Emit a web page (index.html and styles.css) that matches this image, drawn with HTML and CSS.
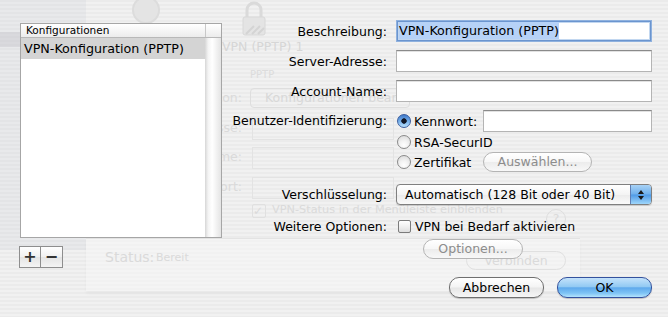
FILE: index.html
```html
<!DOCTYPE html>
<html lang="de">
<head>
  <meta charset="UTF-8" />
  <title>VPN-Konfiguration</title>
  <link rel="stylesheet" href="styles.css">
</head>
<body>
  <div class="window">
    <!-- faded window content behind the sheet -->
    <div class="ghost ghost-sidebar"></div>
    <div class="ghost ghost-row"></div>
    <div class="ghost ghost-globe"></div>
    <svg class="ghost ghost-lock" width="24" height="36" viewBox="0 0 24 36">
      <path d="M5 17 V10 a7 7 0 0 1 14 0 V17" fill="none" stroke="#dadada" stroke-width="3"/>
      <rect x="1" y="17" width="22" height="18" rx="2" fill="#e4e4e4" stroke="#d8d8d8"/>
      <path d="M4 34 l8 -8 M10 34 l8 -8 M16 34 l6 -6" stroke="#d4d4d4" stroke-width="2"/>
    </svg>
    <div class="ghost ghost-title">VPN (PPTP) 1</div>
    <div class="ghost ghost-sub">PPTP</div>
    <div class="ghost ghost-label label-konf">Konfiguration:</div>
    <div class="ghost ghost-popup">Konfigurationen bearbeiten</div>
    <div class="ghost ghost-label label-server">Server-Adresse:</div>
    <div class="ghost ghost-label label-account">Account-Name:</div>
    <div class="ghost ghost-label label-pass">Kennwort:</div>
    <div class="ghost ghost-field field-a"></div>
    <div class="ghost ghost-field field-b"></div>
    <div class="ghost ghost-field field-c"></div>
    <div class="ghost ghost-check"><span class="ghost-box">&#10003;</span>VPN-Status in der Menüleiste einblenden</div>
    <div class="ghost ghost-help">?</div>
    <div class="ghost ghost-panel"><span class="status">Status:</span><span class="status-value">Bereit</span></div>
    <div class="ghost ghost-connect">Verbinden</div>

    <div class="sheet">
      <div class="list-col">
        <div class="list">
          <div class="list-header">
            <div class="list-header-cell">Konfigurationen</div>
            <div class="list-header-end"></div>
          </div>
          <div class="list-body">
            <div class="list-rows">
              <div class="list-row selected">VPN-Konfiguration (PPTP)</div>
            </div>
            <div class="list-scroller"></div>
          </div>
        </div>
        <div class="list-buttons">
          <div class="square-btn">+</div>
          <div class="square-btn">&minus;</div>
        </div>
      </div>

      <div class="form-col">
        <div class="row">
          <div class="label">Beschreibung:</div>
          <div class="field focused"><span class="selection">VPN-Konfiguration (PPTP)</span></div>
        </div>
        <div class="row">
          <div class="label">Server-Adresse:</div>
          <div class="field"></div>
        </div>
        <div class="row">
          <div class="label">Account-Name:</div>
          <div class="field"></div>
        </div>
        <div class="row row-top">
          <div class="label label-tall">Benutzer-Identifizierung:</div>
          <div class="radio-group">
            <div class="radio-line tall">
              <span class="radio checked"></span><span class="radio-text">Kennwort:</span>
              <div class="field small"></div>
            </div>
            <div class="radio-line">
              <span class="radio"></span><span class="radio-text">RSA-SecurID</span>
            </div>
            <div class="radio-line">
              <span class="radio"></span><span class="radio-text">Zertifikat</span>
              <div class="pill-btn disabled choose">Auswählen...</div>
            </div>
          </div>
        </div>
        <div class="row row-popup">
          <div class="label">Verschlüsselung:</div>
          <div class="popup">
            <span class="popup-text">Automatisch (128 Bit oder 40 Bit)</span>
            <span class="popup-arrows">
              <svg width="8" height="12" viewBox="0 0 8 12">
                <path d="M4 1 L7 5 H1 Z M4 11 L7 7 H1 Z" fill="#1a1a1a"/>
              </svg>
            </span>
          </div>
        </div>
        <div class="row row-check">
          <div class="label">Weitere Optionen:</div>
          <span class="checkbox"></span><span class="check-text">VPN bei Bedarf aktivieren</span>
        </div>
        <div class="row row-options">
          <div class="label"></div>
          <div class="pill-btn disabled options">Optionen...</div>
        </div>
        <div class="footer">
          <div class="pill-btn footer-btn">Abbrechen</div>
          <div class="pill-btn footer-btn default">OK</div>
        </div>
      </div>
    </div>
  </div>
</body>
</html>
```

FILE: styles.css
```css
body {
  margin: 0;
  font-family: 'DejaVu Sans', 'Liberation Sans', sans-serif;
  font-size: 12.5px;
  color: #000;
}
.window {
  position: relative;
  width: 668px;
  height: 317px;
  overflow: hidden;
  background: repeating-linear-gradient(#ebebeb 0 2px, #f1f1f1 2px 4px);
}

/* ghost content of the window behind the sheet */
.ghost {
  position: absolute;
  color: #dadada;
  white-space: nowrap;
}
.ghost-sidebar {
  left: 0;
  top: 0;
  width: 86px;
  height: 250px;
  background: rgba(200, 204, 214, 0.22);
}
.ghost-row {
  left: 0;
  top: 32px;
  width: 86px;
  height: 15px;
  background: rgba(190, 190, 196, 0.35);
}
.ghost-globe {
  left: 132px;
  top: -4px;
  width: 24px;
  height: 24px;
  border: 2px solid #dcdcdc;
  border-radius: 50%;
  background: #e4e4e4;
}
.ghost-lock {
  left: 242px;
  top: 0;
}
.ghost-title {
  left: 222px;
  top: 39px;
  color: #d6d6d6;
}
.ghost-sub {
  left: 250px;
  top: 69px;
  font-size: 10px;
  color: #dcdcdc;
}
.ghost-label {
  width: 130px;
  text-align: right;
  left: 112px;
}
.label-konf { top: 90px; }
.label-server { top: 120px; }
.label-account { top: 149px; }
.label-pass { top: 179px; }
.ghost-popup {
  left: 250px;
  top: 88px;
  width: 160px;
  height: 20px;
  box-sizing: border-box;
  border: 1px solid #dedede;
  border-radius: 4px;
  padding: 1px 0 0 14px;
  color: #d8d8d8;
}
.ghost-field {
  left: 252px;
  width: 140px;
  height: 20px;
  border: 1px solid #e3e3e3;
}
.field-a { top: 118px; }
.field-b { top: 147px; }
.field-c { top: 177px; }
.ghost-check {
  left: 252px;
  top: 203px;
  font-size: 11.3px;
}
.ghost-box {
  display: inline-block;
  width: 12px;
  height: 12px;
  margin-right: 6px;
  border: 1px solid #e0e0e0;
  border-radius: 2px;
  font-size: 12px;
  line-height: 12px;
  vertical-align: -2px;
}
.ghost-help {
  left: 546px;
  top: 209px;
  width: 18px;
  height: 18px;
  border: 1px solid #dedede;
  border-radius: 50%;
  text-align: center;
  line-height: 18px;
}
.ghost-panel {
  left: 86px;
  top: 238px;
  width: 494px;
  height: 52px;
  border-top: 1px solid #e3e3e3;
  background: rgba(246, 246, 246, 0.55);
  box-shadow: 0 3px 3px rgba(0, 0, 0, 0.03);
}
.status {
  position: absolute;
  left: 19px;
  top: 10px;
  font-size: 14px;
}
.status-value {
  position: absolute;
  left: 70px;
  top: 12px;
  font-size: 11px;
}
.ghost-connect {
  left: 466px;
  top: 251px;
  width: 100px;
  height: 19px;
  box-sizing: border-box;
  border: 1px solid #e0e0e0;
  border-radius: 10px;
  text-align: center;
  line-height: 18px;
}

/* sheet */
.sheet {
  position: absolute;
  inset: 0;
  display: flex;
  padding: 20px 16px 0 19px;
}
.list-col {
  width: 203px;
  margin-right: 10px;
}
.list {
  margin: 3px 0 0 1px;
  width: 202px;
  height: 215px;
  box-sizing: border-box;
  border: 1px solid #a6a6a6;
  background: #fff;
  display: flex;
  flex-direction: column;
}
.list-header {
  display: flex;
  height: 13px;
  border-bottom: 1px solid #b8b8b8;
  background: linear-gradient(#ffffff, #ececec);
  font-size: 10.5px;
  line-height: 13px;
}
.list-header-cell {
  flex: 1;
  padding-left: 5px;
  border-right: 1px solid #c8c8c8;
}
.list-header-end {
  width: 15px;
}
.list-body {
  flex: 1;
  display: flex;
}
.list-rows {
  flex: 1;
}
.list-row {
  height: 21px;
  line-height: 21px;
  padding-left: 3px;
  font-size: 12.7px;
}
.list-row.selected {
  background: #d4d4d4;
}
.list-scroller {
  width: 16px;
  background: linear-gradient(to right, #d6d6d6 0, #f4f4f4 20%, #ffffff 45%, #e4e4e4 100%);
}
.list-buttons {
  display: flex;
  margin-top: 8px;
}
.square-btn {
  width: 22px;
  height: 22px;
  box-sizing: border-box;
  border: 1px solid #8e8e8e;
  background: linear-gradient(#ffffff, #f0f0f0 50%, #e4e4e4 51%, #f4f4f4);
  text-align: center;
  line-height: 19px;
  font-size: 16px;
  font-weight: bold;
  color: #333;
}
.square-btn + .square-btn {
  border-left: none;
}

/* form */
.form-col {
  width: 420px;
  display: flex;
  flex-direction: column;
}
.row {
  display: flex;
  align-items: center;
  margin-top: 8px;
}
.row:first-child {
  margin-top: 0;
}
.row-top {
  align-items: flex-start;
}
.label {
  width: 155px;
  margin-right: 9px;
  text-align: right;
  flex-shrink: 0;
}
.label-tall {
  line-height: 22px;
}
.field {
  width: 256px;
  height: 22px;
  box-sizing: border-box;
  border: 1px solid #b4b4b4;
  border-top-color: #8a8a8a;
  background: #fff;
  box-shadow: inset 0 1px 0 #e2e2e2;
  padding-left: 2px;
  line-height: 20px;
}
.field.focused {
  border: 1px solid #8fb1de;
  box-shadow: inset 0 0 0 1px #6b95cf, inset 0 0 0 2px #c2d7f0;
  padding-left: 2px;
}
.selection {
  background: #b6d2f7;
  font-size: 12.7px;
  padding: 1px 0;
}
.field.small {
  width: 169px;
  margin-left: auto;
}
.radio-group {
  width: 256px;
}
.radio-line {
  display: flex;
  align-items: center;
  height: 20px;
}
.radio-line.tall {
  height: 22px;
}
.radio {
  width: 14px;
  height: 14px;
  margin-left: 1px;
  box-sizing: border-box;
  border-radius: 50%;
  border: 1px solid #8a8a8a;
  background: radial-gradient(circle at 50% 75%, #ffffff 0, #f2f2f2 40%, #d6d6d6 100%);
  flex-shrink: 0;
}
.radio.checked {
  border-color: #3a5d9e;
  background: radial-gradient(circle at 50% 50%, #111827 0 2.4px, transparent 3px),
    linear-gradient(#3f79c9, #79b3ec 55%, #b8e0fc);
}
.radio-text {
  margin-left: 3px;
}
.pill-btn {
  height: 20px;
  box-sizing: border-box;
  border: 1px solid #6f6f6f;
  border-radius: 10px;
  background: linear-gradient(#ffffff 0, #f4f4f4 48%, #e6e6e6 52%, #f6f6f6 100%);
  text-align: center;
  line-height: 18px;
}
.pill-btn.disabled {
  border-color: #b4b4b4;
  color: #8c8c8c;
  background: linear-gradient(#ffffff 0, #f7f7f7 48%, #ececec 52%, #f8f8f8 100%);
}
.choose {
  width: 109px;
  margin-left: auto;
  margin-right: 60px;
}
.row-popup {
  margin-top: 12px;
}
.popup {
  width: 257px;
  height: 21px;
  box-sizing: border-box;
  display: flex;
  border: 1px solid #7f7f7f;
  border-radius: 4px;
  background: linear-gradient(#ffffff, #f4f4f4 50%, #ebebeb 51%, #fafafa);
  overflow: hidden;
  box-shadow: 0 1px 1px rgba(0, 0, 0, 0.15);
}
.popup-text {
  flex: 1;
  padding-left: 8px;
  line-height: 19px;
}
.popup-arrows {
  width: 20px;
  border-left: 1px solid #5f7fb5;
  background: linear-gradient(#a8d2f6, #6fb0ec 48%, #4f9ae6 52%, #9ed6fb);
  display: flex;
  align-items: center;
  justify-content: center;
}
.row-check {
  margin-top: 12px;
  height: 18px;
}
.checkbox {
  width: 13px;
  height: 13px;
  box-sizing: border-box;
  margin-left: 2px;
  border: 1px solid #7b7b7b;
  border-radius: 2px;
  background: linear-gradient(#ffffff, #f0f0f0 50%, #dedede);
}
.check-text {
  margin-left: 4px;
}
.row-options {
  margin-top: 4px;
}
.options {
  width: 100px;
  margin-left: 27px;
}
.footer {
  display: flex;
  justify-content: flex-end;
  gap: 13px;
  margin-top: 18px;
}
.footer-btn {
  width: 95px;
  height: 21px;
  line-height: 19px;
  box-shadow: 0 1px 1px rgba(0, 0, 0, 0.2);
}
.footer-btn.default {
  border-color: #34529e;
  background: linear-gradient(#c4e2fb 0, #93caf3 45%, #5fa9ec 52%, #7fc4f5 80%, #b4e4fd 100%);
}
```
